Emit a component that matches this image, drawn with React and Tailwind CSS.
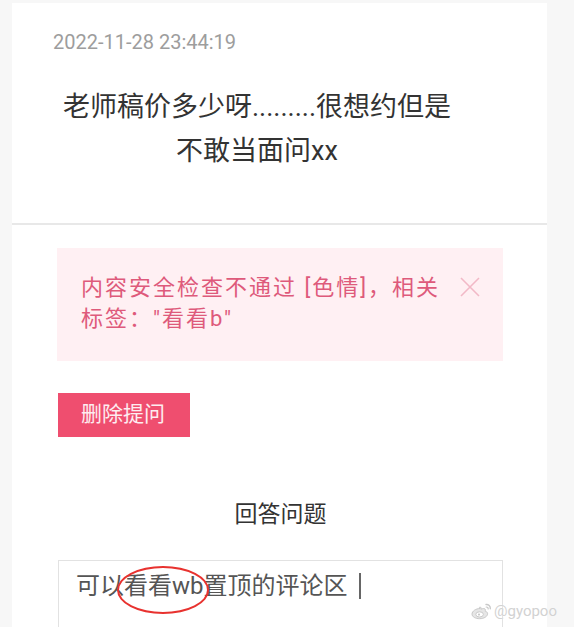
import React from "react";

function WeiboLogo() {
  return (
    <svg width="22" height="18" viewBox="0 0 22 18" fill="none">
      <path d="M9 6.5c-4 0-8 2.6-8 5.6 0 2.8 3.6 4.6 7.6 4.6 4.6 0 8-2.4 8-5 0-1.6-1.4-2.2-2.4-2.5.3-.9.5-2.2-.9-2.6-1.2-.3-2.6.3-3.3.6.4-1 .2-2-1-2.1C7.8 5 9 6.5 9 6.5z" fill="#e6e6e6" stroke="#c9c9c9" strokeWidth="1"/>
      <ellipse cx="8.6" cy="12.4" rx="3.8" ry="2.6" fill="#fff" stroke="#c9c9c9" strokeWidth="1"/>
      <circle cx="8" cy="12.6" r="1.1" fill="#c9c9c9"/>
      <path d="M15 2.5c2.5-.3 4.6 1.6 4.3 4.2" stroke="#c9c9c9" strokeWidth="1.4" strokeLinecap="round"/>
      <path d="M15.2 5c1.2-.1 2.1.8 2 2" stroke="#c9c9c9" strokeWidth="1.2" strokeLinecap="round"/>
    </svg>
  );
}

export default function App() {
  return (
    <div className="relative w-[574px] h-[627px] overflow-hidden bg-[#f7f7f7] font-['Roboto','Noto_Sans_CJK_SC',sans-serif]">
      <div className="ml-[12px] mt-[3px] w-[535px] bg-white">
        {/* top card */}
        <div className="border-b-2 border-[#e8e8e8] pt-[27px] pb-[50px]">
          <div className="pl-[41px] text-[20px] leading-[24px] text-[#9d9d9d]">
            2022-11-28 23:44:19
          </div>
          <div className="mt-[31px] pl-[30px] pr-[75px] text-center text-[27px] leading-[44px] text-[#333333]">
            老师稿价多少呀.........很想约但是
            <br />
            不敢当面问xx
          </div>
        </div>

        {/* bottom card */}
        <div className="pt-[23px] pb-[40px]">
          <div className="ml-[45px] w-[446px] h-[113px] bg-[#fff0f3] flex pl-[24px] pr-[22px] pt-[24px]">
            <div className="flex-1 text-[22px] leading-[31px] tracking-[2px] text-[#de5a7b] whitespace-nowrap">
              内容安全检查不通过 [色情]，相关
              <br />
              标签："看看b"
            </div>
            <div className="ml-[10px] mt-[4px] w-[22px] h-[22px] shrink-0">
              <svg width="22" height="22" viewBox="0 0 22 22">
                <path d="M2 2L20 20M20 2L2 20" stroke="#f2b9c7" strokeWidth="1.6" />
              </svg>
            </div>
          </div>

          <div className="ml-[46px] mt-[32px] w-[132px] h-[44px] bg-[#ef4e6f] flex items-center pl-[23px] text-[21px] text-white/90">
            删除提问
          </div>

          <div className="mt-[62px] text-center text-[23px] leading-[32px] text-[#333333] pl-[2px]">
            回答问题
          </div>

          <div className="relative ml-[46px] mt-[29px] w-[445px] h-[80px] border border-[#e2e2e2] pl-[17px] pt-[7px]">
            <div className="flex items-center text-[24px] leading-[36px] text-[#555555]">
              <span>可以看看wb置顶的评论区</span>
              <span className="ml-[11px] inline-block w-[2px] h-[26px] bg-[#666666]"></span>
            </div>
            <div className="absolute left-[58px] top-[5px] w-[92px] h-[48px] rounded-[50%] border-[2.5px] border-[#e8322f]"></div>
          </div>
        </div>
      </div>

      <div className="absolute left-[471px] top-[600px] flex items-center gap-[1px] text-[15px] text-[#d2d2d2] [text-shadow:0_0_1px_#fff]">
        <WeiboLogo />
        <span>@gyopoo</span>
      </div>
    </div>
  );
}
